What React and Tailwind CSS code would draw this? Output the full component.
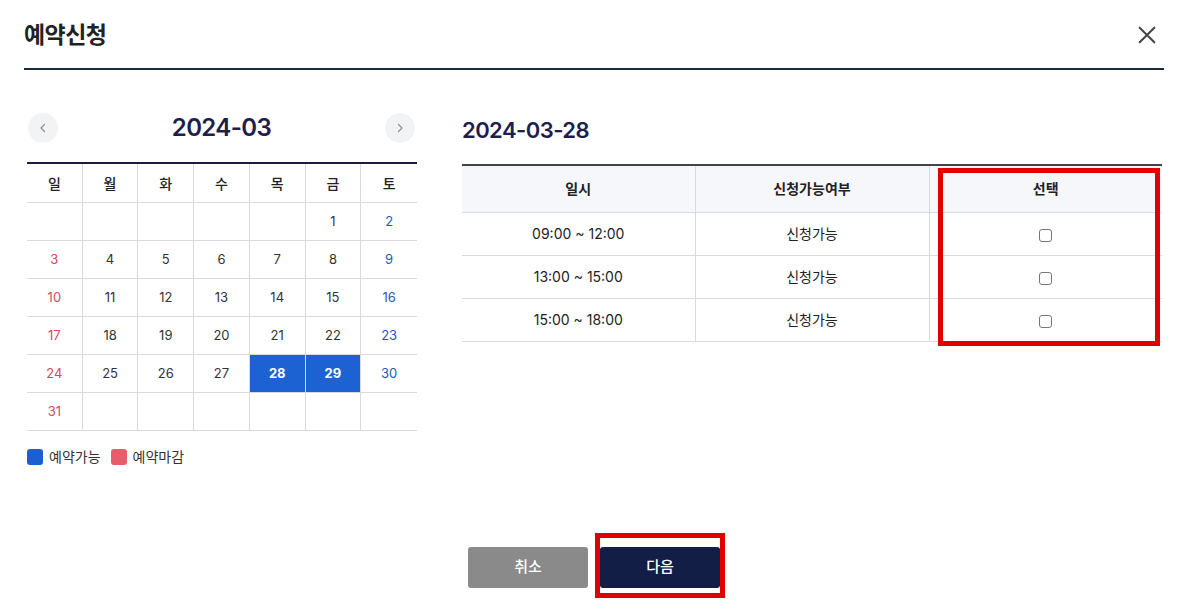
import React from "react";
import { useState } from "react";

const weekDays = ["일", "월", "화", "수", "목", "금", "토"];

// March 2024 starts on Friday
const cells = [
  null, null, null, null, null, 1, 2,
  3, 4, 5, 6, 7, 8, 9,
  10, 11, 12, 13, 14, 15, 16,
  17, 18, 19, 20, 21, 22, 23,
  24, 25, 26, 27, 28, 29, 30,
  31, null, null, null, null, null, null
];

const available = [28, 29];

const slots = [
  { time: "09:00 ~ 12:00", status: "신청가능" },
  { time: "13:00 ~ 15:00", status: "신청가능" },
  { time: "15:00 ~ 18:00", status: "신청가능" }
];

function Chevron({ dir }) {
  return (
    <svg width="12" height="12" viewBox="0 0 24 24" fill="none" stroke="#8b8f96" strokeWidth="2.4" strokeLinecap="round" strokeLinejoin="round">
      {dir === "left" ? <path d="M15 5l-7 7 7 7" /> : <path d="M9 5l7 7-7 7" />}
    </svg>
  );
}

export default function App() {
  const [checked, setChecked] = useState([false, false, false]);

  return (
    <div className="relative h-[602px] w-[1180px] overflow-hidden bg-white text-[#222]" style={{ fontFamily: "Inter, 'Noto Sans CJK KR', sans-serif" }}>
      <header className="ml-6 mr-4 flex h-[70px] items-center justify-between border-b-2 border-[#1b2a3b] pt-[2px]">
        <h1 className="text-[23px] font-bold tracking-tight text-[#222]">예약신청</h1>
        <button className="mr-[6px] text-[#444]" title="닫기">
          <svg width="22" height="22" viewBox="0 0 24 24" fill="none" stroke="currentColor" strokeWidth="2.2" strokeLinecap="round">
            <path d="M4 4l16 16M20 4L4 20" />
          </svg>
        </button>
      </header>

      <div className="flex pl-[27px] pr-[18px] pt-[43px]">
        {/* calendar */}
        <section className="w-[390px] shrink-0">
          <div className="flex h-[30px] items-center justify-between">
            <button className="ml-[1px] flex h-[30px] w-[30px] items-center justify-center rounded-full bg-[#f2f3f5]">
              <Chevron dir="left" />
            </button>
            <div className="text-[24px] font-semibold tracking-tight text-[#1e1d4c]">2024-03</div>
            <button className="mr-[2px] flex h-[30px] w-[30px] items-center justify-center rounded-full bg-[#f2f3f5]">
              <Chevron dir="right" />
            </button>
          </div>

          <div className="mt-[19px] grid grid-cols-7 border-t-2 border-[#1a1d3d]">
            {weekDays.map((d, i) => (
              <div key={d} className={`flex h-[39px] items-center justify-center border-b border-[#d7dadf] text-[14px] font-medium text-[#222] ${i < 6 ? "border-r" : ""}`}>
                {d}
              </div>
            ))}
            {cells.map((n, i) => {
              const col = i % 7;
              const active = n && available.includes(n);
              let color = "text-[#333]";
              if (col === 0) color = "text-[#d24a62]";
              if (col === 6) color = "text-[#1d5bb5]";
              return (
                <div
                  key={i}
                  className={`flex h-[38px] items-center justify-center border-b border-[#d7dadf] text-[13px] ${col < 6 ? "border-r" : ""} ${active ? "bg-[#1c62d3] font-bold text-white" : color}`}
                >
                  {n}
                </div>
              );
            })}
          </div>

          <div className="mt-[15px] flex items-center gap-2 text-[14px] text-[#333]">
            <span className="flex items-center gap-[6px]">
              <span className="h-4 w-4 rounded-[3px] bg-[#1c5fcf]" />
              예약가능
            </span>
            <span className="ml-[2px] flex items-center gap-[6px]">
              <span className="h-4 w-4 rounded-[3px] bg-[#e85c6c]" />
              예약마감
            </span>
          </div>
        </section>

        {/* time slots */}
        <section className="ml-[45px] w-[700px]">
          <h2 className="mt-[2px] h-[30px] text-[22px] font-semibold leading-[30px] tracking-tight text-[#1e1d4c]">2024-03-28</h2>
          <table className="mt-[19px] w-full border-collapse border-t-2 border-[#444] text-[14px]">
            <thead>
              <tr className="h-[47px] bg-[#f5f7fb]">
                <th className="w-[233px] border-b border-r border-[#d7dadf] font-semibold">일시</th>
                <th className="w-[234px] border-b border-r border-[#d7dadf] font-semibold">신청가능여부</th>
                <th className="border-b border-[#d7dadf] font-semibold">선택</th>
              </tr>
            </thead>
            <tbody>
              {slots.map((s, i) => (
                <tr key={s.time} className="h-[43px]">
                  <td className="border-b border-r border-[#d7dadf] text-center">{s.time}</td>
                  <td className="border-b border-r border-[#d7dadf] text-center">{s.status}</td>
                  <td className="border-b border-[#d7dadf] text-center">
                    <input
                      type="checkbox"
                      checked={checked[i]}
                      onChange={() => setChecked(checked.map((v, j) => (j === i ? !v : v)))}
                      className="h-[13px] w-[13px] appearance-none rounded-[3px] border border-[#767676] bg-white align-middle"
                    />
                  </td>
                </tr>
              ))}
            </tbody>
          </table>
        </section>
      </div>

      <div className="absolute left-0 right-0 top-[547px] flex justify-center pl-[8px]">
        <div className="flex gap-3">
          <button className="h-[41px] w-[120px] rounded-[3px] bg-[#8a8a8a] text-[15px] font-medium text-white">취소</button>
          <button className="h-[41px] w-[120px] rounded-[3px] bg-[#121e46] text-[15px] font-medium text-white">다음</button>
        </div>
      </div>

      {/* annotation overlays */}
      <div className="pointer-events-none absolute left-[938px] top-[168px] h-[178px] w-[222px] border-[5px] border-[#e10000]" />
      <div className="pointer-events-none absolute left-[595px] top-[533px] h-[65px] w-[130px] border-[5px] border-[#e10000]" />
    </div>
  );
}
